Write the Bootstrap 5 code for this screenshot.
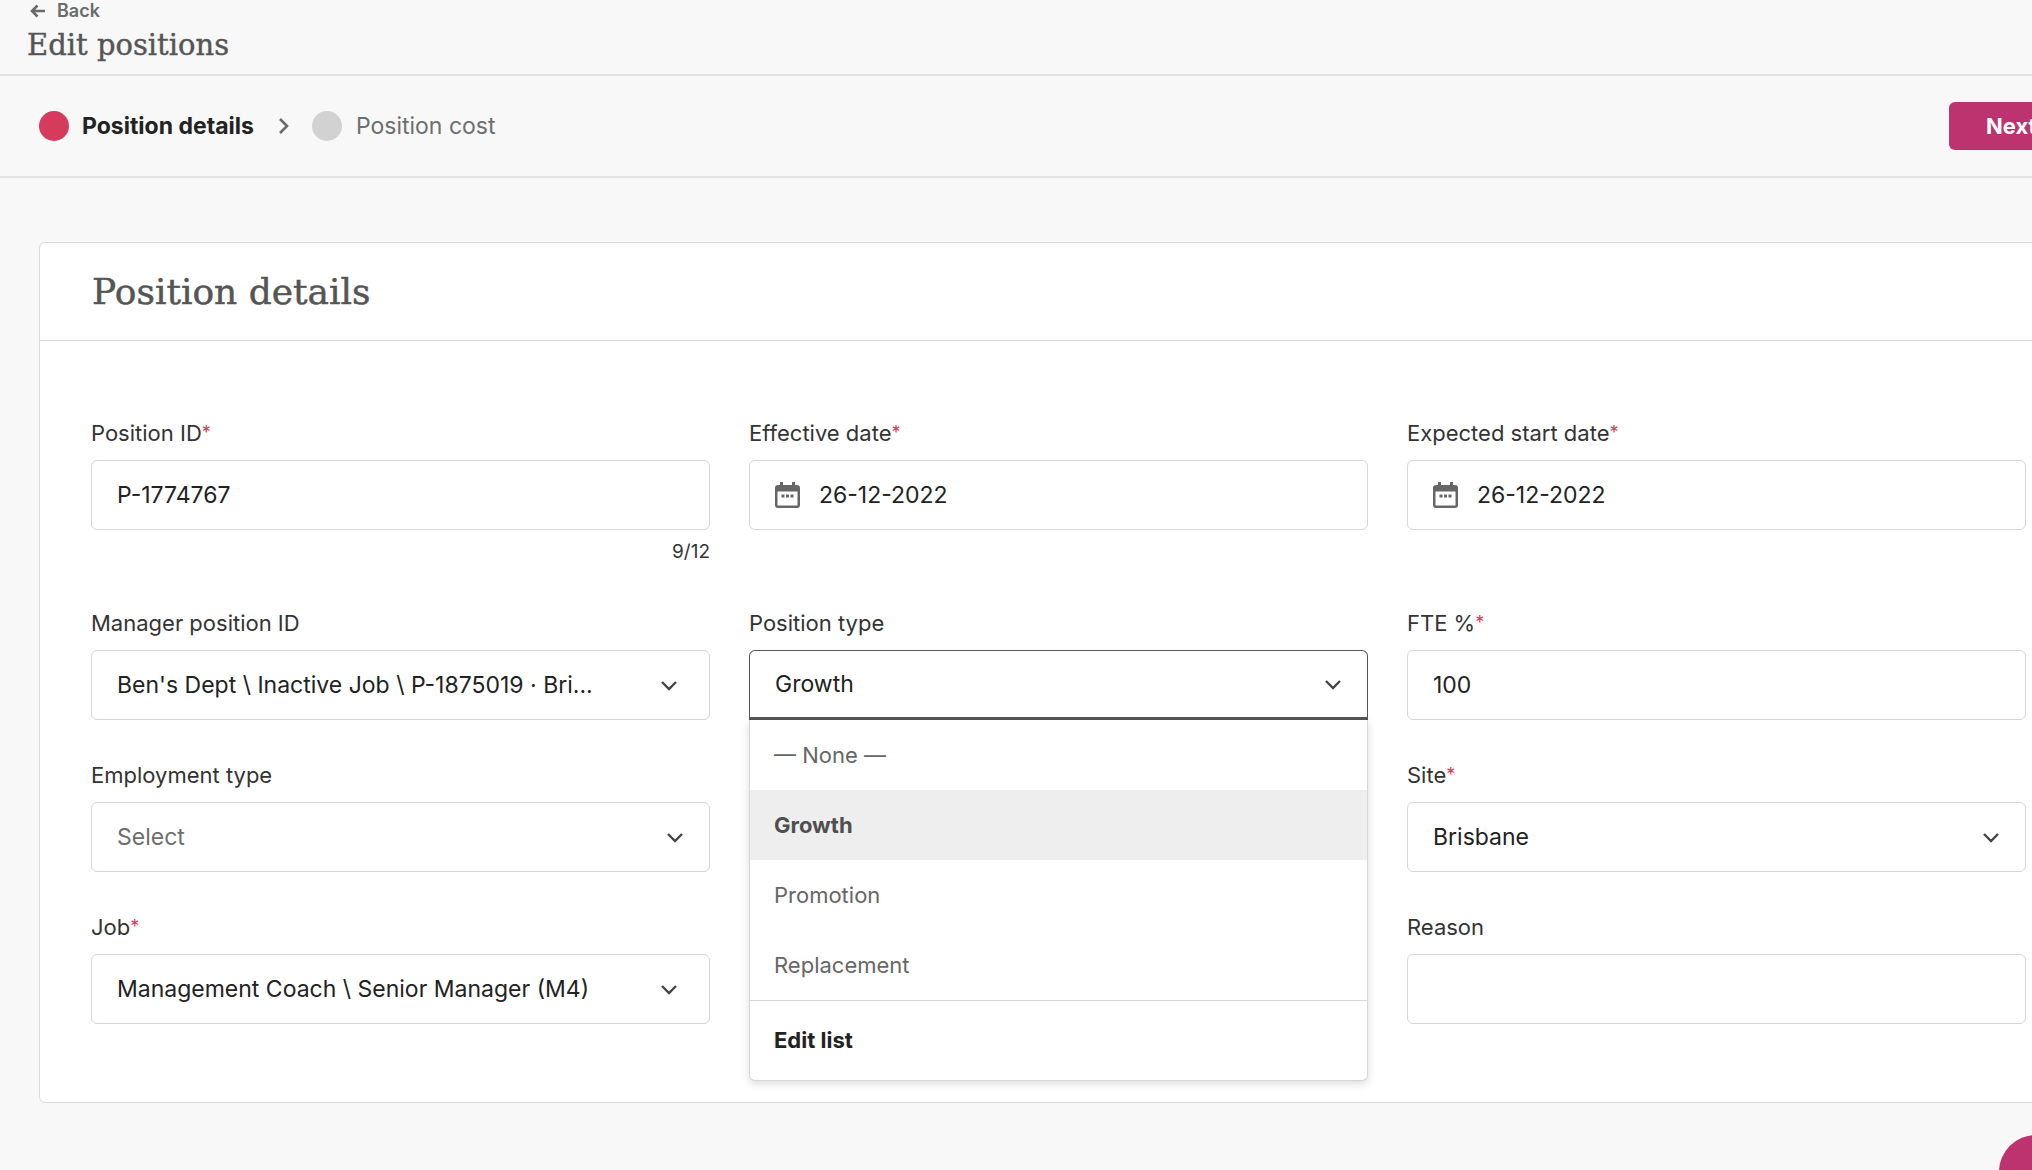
<!DOCTYPE html>
<html lang="en">
<head>
    <meta charset="UTF-8">
    <meta name="viewport" content="width=device-width, initial-scale=1.0">
    <title>Edit positions</title>
    <link href="https://cdn.jsdelivr.net/npm/bootstrap@5.3.0/dist/css/bootstrap.min.css" rel="stylesheet">
    <style>
        body {
            background-color: #f8f8f8;
            font-family: Inter, "Liberation Sans", sans-serif;
            color: #222;
            overflow: hidden;
            width: 2032px;
            height: 1170px;
            position: relative;
        }
        .page-head {
            height: 76px;
            border-bottom: 2px solid #e2e2e2;
            padding-left: 30px;
        }
        .back-link {
            height: 21px;
            color: #6b6b6b;
            font-size: 18px;
            font-weight: 600;
            line-height: 20px;
            gap: 11px;
        }
        .head-title {
            font-family: "DejaVu Serif", serif;
            font-size: 29px;
            font-weight: 400;
            color: #555;
            margin: 6px 0 0 -3px;
            line-height: 36px;
            -webkit-text-stroke: .4px #555;
        }
        .step-bar {
            height: 102px;
            border-bottom: 2px solid #e2e2e2;
            padding-left: 39px;
            font-size: 23px;
        }
        .step-dot { width: 30px; height: 30px; border-radius: 50%; background: #d63a5c; }
        .step-dot.off { background: #d2d2d2; }
        .step-on { font-weight: 700; color: #222; margin-left: 13px; }
        .step-off { color: #6e6e6e; margin-left: 14px; }
        .step-arrow { margin: 0 23px 0 24px; }
        .next-btn {
            position: absolute;
            left: 1949px;
            top: 102px;
            width: 130px;
            height: 48px;
            background: #bd3370;
            color: #fff;
            font-size: 22px;
            font-weight: 700;
            border: 0;
            border-radius: 6px;
            text-align: left;
            padding-left: 37px;
        }
        .pos-card {
            width: 2100px;
            height: 861px;
            background: #fff;
            border: 1px solid #d9d9d9;
            border-radius: 6px;
            margin: 64px 0 0 39px;
        }
        .pos-card-head {
            height: 98px;
            border-bottom: 1px solid #d9d9d9;
            padding-left: 52px;
        }
        .pos-card-head h2 {
            font-family: "DejaVu Serif", serif;
            font-size: 36px;
            font-weight: 400;
            color: #555;
            margin: 0;
            -webkit-text-stroke: .5px #555;
        }
        .field-grid {
            display: grid;
            grid-template-columns: repeat(3, 619px);
            grid-template-rows: 190px 152px 152px 100px;
            column-gap: 39px;
            padding: 77px 0 0 51px;
        }
        .field-cell { position: relative; }
        .field-label { font-size: 22px; line-height: 30px; color: #333; margin: 0 0 12px; display: block; }
        .field-label span { color: #d63a5c; font-size: 18px; vertical-align: top; }
        .form-control.field-box {
            height: 70px;
            border: 1px solid #d6d6d6;
            border-radius: 6px;
            padding: 0 25px;
            font-size: 23px;
            color: #222;
            background: #fff;
            box-shadow: none;
        }
        .form-control.field-box.open { border: 1px solid #555; border-bottom-width: 3px; border-radius: 6px 6px 0 0; }
        .field-box .muted-val { color: #6e6e6e; }
        .field-box .caret-far { margin-right: 6px; }
        .date-icon { margin-right: 19px; flex: none; }
        .char-count { text-align: right; font-size: 19px; line-height: 26px; margin-top: 9px; color: #333; }
        .type-menu {
            position: absolute;
            left: 0;
            top: 112px;
            width: 619px;
            background: #fff;
            border: 1px solid #d6d6d6;
            border-top: 0;
            border-radius: 0 0 6px 6px;
            box-shadow: 0 3px 8px rgba(0, 0, 0, .14);
            z-index: 5;
        }
        .type-menu .opt { height: 70px; padding-left: 24px; font-size: 22px; color: #666; }
        .type-menu .opt.on { background: #eee; font-weight: 700; color: #4f4f4f; }
        .type-menu .opt-edit {
            height: 80px;
            padding-left: 24px;
            border-top: 1px solid #d6d6d6;
            font-size: 22px;
            font-weight: 700;
            color: #222;
        }
        .fab {
            position: absolute;
            left: 1999px;
            top: 1135px;
            width: 74px;
            height: 74px;
            border-radius: 50%;
            background: #bd3370;
        }
    </style>
</head>
<body>
    <div class="page-head">
        <div class="back-link d-flex align-items-center">
            <svg width="16" height="14" viewBox="0 0 16 14" fill="none" stroke="#6b6b6b" stroke-width="2.6"><path d="M15 7H2M7.500 1.500 2 7l5.500 5.500"/></svg>
            <span>Back</span>
        </div>
        <h1 class="head-title">Edit positions</h1>
    </div>

    <div class="step-bar d-flex align-items-center">
        <div class="step-dot"></div>
        <div class="step-on">Position details</div>
        <svg class="step-arrow" width="11" height="18" viewBox="0 0 11 18" fill="none" stroke="#6b6b6b" stroke-width="2.6"><path d="m2 2 7 7-7 7"/></svg>
        <div class="step-dot off"></div>
        <div class="step-off">Position cost</div>
    </div>
    <button class="next-btn" type="button">Next</button>

    <div class="pos-card">
        <div class="pos-card-head d-flex align-items-center">
            <h2>Position details</h2>
        </div>
        <div class="field-grid">
            <div class="field-cell">
                <label class="field-label">Position ID<span>*</span></label>
                <div class="form-control field-box d-flex align-items-center">P-1774767</div>
                <div class="char-count">9/12</div>
            </div>
            <div class="field-cell">
                <label class="field-label">Effective date<span>*</span></label>
                <div class="form-control field-box d-flex align-items-center">
                    <svg class="date-icon" width="25" height="26" viewBox="0 0 25 26"><path fill="#666" d="M5 0h3v3h9V0h3v3h2a3 3 0 0 1 3 3v17a3 3 0 0 1-3 3H3a3 3 0 0 1-3-3V6a3 3 0 0 1 3-3h2z"/><path fill="#fff" d="M2.500 9.500h20V23a.5.5 0 0 1-.5.500H3a.5.5 0 0 1-.5-.5z"/><path fill="#666" d="M6.500 12.500h3v3h-3zM11 12.500h3v3h-3zM15.500 12.500h3v3h-3z"/></svg>
                    <span>26-12-2022</span>
                </div>
            </div>
            <div class="field-cell">
                <label class="field-label">Expected start date<span>*</span></label>
                <div class="form-control field-box d-flex align-items-center">
                    <svg class="date-icon" width="25" height="26" viewBox="0 0 25 26"><path fill="#666" d="M5 0h3v3h9V0h3v3h2a3 3 0 0 1 3 3v17a3 3 0 0 1-3 3H3a3 3 0 0 1-3-3V6a3 3 0 0 1 3-3h2z"/><path fill="#fff" d="M2.500 9.500h20V23a.5.5 0 0 1-.5.500H3a.5.5 0 0 1-.5-.5z"/><path fill="#666" d="M6.500 12.500h3v3h-3zM11 12.500h3v3h-3zM15.500 12.500h3v3h-3z"/></svg>
                    <span>26-12-2022</span>
                </div>
            </div>

            <div class="field-cell">
                <label class="field-label">Manager position ID</label>
                <div class="form-control field-box d-flex align-items-center justify-content-between">
                    <span>Ben's Dept \ Inactive Job \ P-1875019 · Bri...</span>
                    <svg class="caret-far" width="18" height="11" viewBox="0 0 18 11" fill="none" stroke="#444" stroke-width="2.4"><path d="m2 2 7 7 7-7"/></svg>
                </div>
            </div>
            <div class="field-cell">
                <label class="field-label">Position type</label>
                <div class="form-control field-box open d-flex align-items-center justify-content-between">
                    <span>Growth</span>
                    <svg width="18" height="11" viewBox="0 0 18 11" fill="none" stroke="#444" stroke-width="2.4"><path d="m2 2 7 7 7-7"/></svg>
                </div>
                <div class="type-menu">
                    <div class="opt d-flex align-items-center">— None —</div>
                    <div class="opt on d-flex align-items-center">Growth</div>
                    <div class="opt d-flex align-items-center">Promotion</div>
                    <div class="opt d-flex align-items-center">Replacement</div>
                    <div class="opt-edit d-flex align-items-center">Edit list</div>
                </div>
            </div>
            <div class="field-cell">
                <label class="field-label">FTE %<span>*</span></label>
                <div class="form-control field-box d-flex align-items-center">100</div>
            </div>

            <div class="field-cell">
                <label class="field-label">Employment type</label>
                <div class="form-control field-box d-flex align-items-center justify-content-between">
                    <span class="muted-val">Select</span>
                    <svg width="18" height="11" viewBox="0 0 18 11" fill="none" stroke="#444" stroke-width="2.4"><path d="m2 2 7 7 7-7"/></svg>
                </div>
            </div>
            <div class="field-cell"></div>
            <div class="field-cell">
                <label class="field-label">Site<span>*</span></label>
                <div class="form-control field-box d-flex align-items-center justify-content-between">
                    <span>Brisbane</span>
                    <svg width="18" height="11" viewBox="0 0 18 11" fill="none" stroke="#444" stroke-width="2.4"><path d="m2 2 7 7 7-7"/></svg>
                </div>
            </div>

            <div class="field-cell">
                <label class="field-label">Job<span>*</span></label>
                <div class="form-control field-box d-flex align-items-center justify-content-between">
                    <span>Management Coach \ Senior Manager (M4)</span>
                    <svg class="caret-far" width="18" height="11" viewBox="0 0 18 11" fill="none" stroke="#444" stroke-width="2.4"><path d="m2 2 7 7 7-7"/></svg>
                </div>
            </div>
            <div class="field-cell"></div>
            <div class="field-cell">
                <label class="field-label">Reason</label>
                <div class="form-control field-box"></div>
            </div>
        </div>
    </div>
    <div class="fab"></div>

    <script src="https://cdn.jsdelivr.net/npm/bootstrap@5.3.0/dist/js/bootstrap.bundle.min.js"></script>
</body>
</html>
